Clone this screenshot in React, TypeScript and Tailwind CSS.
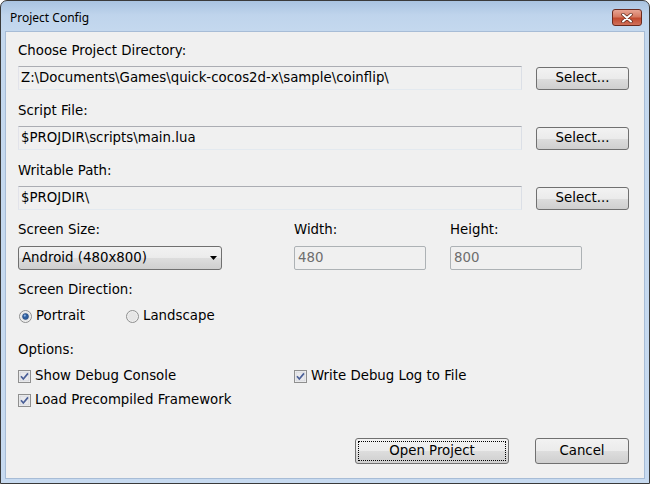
import React from 'react';

const btnBase =
  'flex items-center rounded-[3px] border border-[#707070] bg-[linear-gradient(to_bottom,#f2f2f2_0%,#ebebeb_50%,#dddddd_51%,#cfcfcf_100%)] text-black';
const btn = `${btnBase} justify-center`;

function TextBox({ value, width }: { value: string; width: string }) {
  return (
    <div
      className={`${width} h-[24px] flex items-center pl-[2px] border border-[#abadb3] border-b-[#e3e9ef] border-r-[#dbdfe6] border-l-[#e2e3ea] bg-[#f0f0f0] whitespace-nowrap overflow-hidden`}
    >
      {value}
    </div>
  );
}

function PathRow({ label, value }: { label: string; value: string }) {
  return (
    <div className="flex flex-col">
      <div className="h-[16px] leading-[16px]">{label}</div>
      <div className="flex items-center mt-[7px]">
        <TextBox value={value} width="w-[504px]" />
        <button className={`${btn} ml-[14px] w-[93px] h-[23px]`}>Select...</button>
      </div>
    </div>
  );
}

function Check({ label }: { label: string }) {
  return (
    <div className="flex items-center h-[16px]">
      <svg width="13" height="13" viewBox="0 0 13 13" className="mr-[4px]">
        <rect x="0.5" y="0.5" width="12" height="12" fill="#f4f4f4" stroke="#8f8f8f" />
        <rect x="2" y="2" width="9" height="9" fill="#e9e9ec" stroke="#c9ccd4" strokeWidth="0.6" />
        <path d="M3 6.3 L5.3 9 L10 3.4" fill="none" stroke="#4a5f97" strokeWidth="1.7" />
      </svg>
      <span>{label}</span>
    </div>
  );
}

function Radio({ label, checked }: { label: string; checked?: boolean }) {
  return (
    <div className="flex items-center h-[16px]">
      <svg width="13" height="13" viewBox="0 0 13 13" className="mr-[4px]">
        <circle cx="6.5" cy="6.5" r="6" fill="#f0f0f0" stroke="#8e8f8f" />
        <circle cx="6.5" cy="6.5" r="4.6" fill="#e6e6e6" />
        {checked && <circle cx="6.5" cy="6.5" r="3" fill="#2f5f9f" stroke="#1a3a6a" strokeWidth="0.5" />}
        {checked && <circle cx="5.8" cy="5.6" r="1.1" fill="#8fb6e8" />}
      </svg>
      <span>{label}</span>
    </div>
  );
}

export default function App() {
  return (
    <div
      className="w-[650px] h-[484px] bg-white text-black text-[13.33px]"
      style={{ fontFamily: 'Verdana, "DejaVu Sans", sans-serif' }}
    >
      <div className="w-full h-full rounded-t-[7px] border border-[#3a3a3a] bg-[linear-gradient(to_bottom,#a9c3e0_0px,#bfd4ec_14px,#c4d8ee_29px,#c7daf0_100%)] flex flex-col overflow-hidden">
        {/* Title bar */}
        <div className="h-[30px] flex items-start pl-[9px] pr-[7px] shrink-0">
          <span
            className="text-[12px] leading-[16px] text-black flex-1 pt-[9px]"
            style={{ fontFamily: '"Noto Sans", "Open Sans", sans-serif' }}
          >
            Project Config
          </span>
          <div className="w-[30px] h-[17px] mt-[8px] rounded-[3px] border border-[#6b2a1e] bg-[linear-gradient(to_bottom,#e8a493_0%,#d77a62_45%,#c24a2f_55%,#d0705a_100%)] flex items-center justify-center">
            <svg width="12" height="10" viewBox="0 0 12 10">
              <path d="M2 1.5 L10 8.5 M10 1.5 L2 8.5" stroke="#5a2416" strokeWidth="3.4" strokeLinecap="round" />
              <path d="M2 1.5 L10 8.5 M10 1.5 L2 8.5" stroke="#ffffff" strokeWidth="2" strokeLinecap="round" />
            </svg>
          </div>
        </div>

        {/* Client area */}
        <div className="flex-1 mx-[4px] mb-[4px] border border-[#a7bcd6] bg-[#f0f0f0] pl-[12px] pt-[11px] flex flex-col">
          <PathRow label="Choose Project Directory:" value="Z:\Documents\Games\quick-cocos2d-x\sample\coinflip\" />
          <div className="mt-[13px]">
            <PathRow label="Script File:" value="$PROJDIR\scripts\main.lua" />
          </div>
          <div className="mt-[13px]">
            <PathRow label="Writable Path:" value="$PROJDIR\" />
          </div>

          {/* Screen size */}
          <div className="mt-[12px] flex">
            <div className="w-[276px] flex flex-col">
              <div className="h-[16px] leading-[16px]">Screen Size:</div>
              <div className={`${btnBase} justify-between mt-[8px] w-[204px] h-[24px] pl-[3px] pr-[4px]`}>
                <span>Android (480x800)</span>
                <svg width="7" height="4" viewBox="0 0 7 4">
                  <path d="M0 0 L7 0 L3.5 4 Z" fill="#000" />
                </svg>
              </div>
            </div>
            <div className="w-[156px] flex flex-col">
              <div className="h-[16px] leading-[16px]">Width:</div>
              <div className="mt-[8px] w-[132px] h-[24px] rounded-[2px] border border-[#adb2b5] bg-[#f0f0f0] flex items-center pl-[3px] text-[#6d6d6d]">
                480
              </div>
            </div>
            <div className="flex flex-col">
              <div className="h-[16px] leading-[16px]">Height:</div>
              <div className="mt-[8px] w-[132px] h-[24px] rounded-[2px] border border-[#adb2b5] bg-[#f0f0f0] flex items-center pl-[3px] text-[#6d6d6d]">
                800
              </div>
            </div>
          </div>

          {/* Screen direction */}
          <div className="mt-[12px] h-[16px] leading-[16px]">Screen Direction:</div>
          <div className="mt-[10px] flex pl-[1px]">
            <div className="w-[107px]">
              <Radio label="Portrait" checked />
            </div>
            <Radio label="Landscape" />
          </div>

          {/* Options */}
          <div className="mt-[18px] h-[16px] leading-[16px]">Options:</div>
          <div className="mt-[10px] flex">
            <div className="w-[276px]">
              <Check label="Show Debug Console" />
            </div>
            <Check label="Write Debug Log to File" />
          </div>
          <div className="mt-[8px]">
            <Check label="Load Precompiled Framework" />
          </div>

          {/* Buttons */}
          <div className="mt-[30px] flex pl-[337px]">
            <button className={`${btn} w-[154px] h-[26px] border-[#3c7fb1] p-[2px]`}>
              <span className="w-full h-full flex items-center justify-center border border-dotted border-black">
                Open Project
              </span>
            </button>
            <button className={`${btn} ml-[26px] w-[94px] h-[26px]`}>Cancel</button>
          </div>
        </div>
      </div>
    </div>
  );
}
